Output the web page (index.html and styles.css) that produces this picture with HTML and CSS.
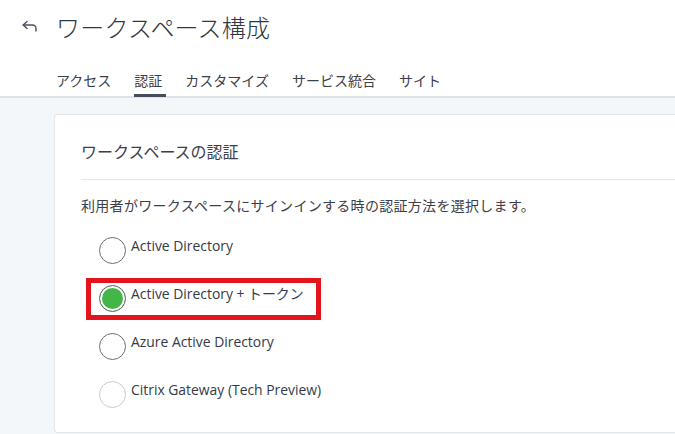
FILE: index.html
```html
<!DOCTYPE html>
<html lang="ja">
<head>
    <meta charset="UTF-8">
    <meta name="viewport" content="width=device-width, initial-scale=1.0">
    <title>ワークスペース構成</title>
    <link rel="stylesheet" href="styles.css">
</head>
<body>
    <!-- Header -->
    <header>
        <div class="topbar">
            <a href="#" class="back" aria-label="戻る">
                <svg width="16" height="12" viewBox="0 0 16 12" fill="none" stroke="#4a5060" stroke-width="1.4" stroke-linecap="round" stroke-linejoin="round">
                    <path d="M5 1.5 L1.2 5 L5 8.5"/>
                    <path d="M1.2 5 H10.5 A3.5 3.5 0 0 1 14 8.5 V11"/>
                </svg>
            </a>
            <h1>ワークスペース構成</h1>
        </div>
        <nav class="tabs">
            <a href="#" class="tab">アクセス</a>
            <a href="#" class="tab active">認証</a>
            <a href="#" class="tab">カスタマイズ</a>
            <a href="#" class="tab">サービス統合</a>
            <a href="#" class="tab">サイト</a>
        </nav>
    </header>

    <!-- Content -->
    <main class="content">
        <section class="card">
            <h2>ワークスペースの認証</h2>
            <hr>
            <p class="desc">利用者がワークスペースにサインインする時の認証方法を選択します。</p>

            <div class="options">
                <label class="option">
                    <span class="radio"></span>
                    <span class="label">Active Directory</span>
                </label>
                <label class="option">
                    <span class="radio checked"></span>
                    <span class="label">Active Directory + トークン</span>
                    <span class="callout"></span>
                </label>
                <label class="option">
                    <span class="radio"></span>
                    <span class="label">Azure Active Directory</span>
                </label>
                <label class="option">
                    <span class="radio faint"></span>
                    <span class="label">Citrix Gateway (Tech Preview)</span>
                </label>
            </div>
        </section>
    </main>
</body>
</html>
```

FILE: styles.css
```css
/* General */
body {
    margin: 0;
    font-family: "Open Sans", "Noto Sans CJK JP", sans-serif;
    color: #333740;
    background: #f4f7fa;
    overflow: hidden;
}

/* Header */
header {
    background: #ffffff;
}

.topbar {
    display: flex;
    align-items: center;
    height: 52px;
    padding-left: 22px;
}

.back {
    display: flex;
    width: 16px;
    margin-right: 18px;
}

.topbar h1 {
    margin: 0;
    font-family: "Noto Sans CJK JP", sans-serif;
    font-size: 24px;
    font-weight: 300;
    letter-spacing: 0.2px;
    color: #333740;
}

.tabs {
    display: flex;
    gap: 19px;
    padding: 18px 0 0 56px;
    border-bottom: 2px solid #dfe3e8;
}

.tab {
    padding: 0 4px 4px 0;
    margin-bottom: -1px;
    font-family: "Noto Sans CJK JP", sans-serif;
    font-size: 14px;
    line-height: 20px;
    color: #3c404a;
    text-decoration: none;
    border-bottom: 3px solid transparent;
}

.tab.active {
    border-bottom-color: #454c5e;
}

/* Card */
.content {
    padding: 16px 0 0 54px;
}

.card {
    height: 319px;
    padding: 24px 0 0 26px;
    box-sizing: border-box;
    background: #ffffff;
    border: 1px solid #e3e6ea;
    border-right: none;
    border-radius: 4px 0 0 4px;
}

.card h2 {
    margin: 0 0 16px;
    font-family: "Noto Sans CJK JP", sans-serif;
    font-size: 16px;
    font-weight: 400;
    line-height: 24px;
    color: #3c404a;
}

.card hr {
    margin: 0;
    border: 0;
    border-top: 1px solid #e3e6ea;
}

.desc {
    margin: 15px 0 0;
    font-family: "Noto Sans CJK JP", sans-serif;
    font-size: 14px;
    line-height: 20px;
    letter-spacing: 0.3px;
    color: #3c404a;
}

/* Radio options */
.options {
    display: flex;
    flex-direction: column;
    margin-top: 21px;
    padding-left: 18px;
}

.option {
    position: relative;
    display: flex;
    align-items: flex-start;
    gap: 5px;
    height: 48px;
}

.radio {
    width: 27px;
    height: 27px;
    margin-top: 1px;
    box-sizing: border-box;
    border: 1px solid #6b6e75;
    border-radius: 50%;
    background: #ffffff;
}

.radio.faint {
    border-color: #c8cacd;
}

.radio.checked {
    background: #44b649;
    box-shadow: inset 0 0 0 2px #ffffff;
}

.label {
    font-size: 13.9px;
    line-height: 20px;
    color: #333a48;
}

/* Red annotation box over the selected option */
.callout {
    position: absolute;
    left: -13px;
    top: -6px;
    width: 235px;
    height: 42px;
    box-sizing: border-box;
    border: 5px solid #e3141b;
    pointer-events: none;
}
```
